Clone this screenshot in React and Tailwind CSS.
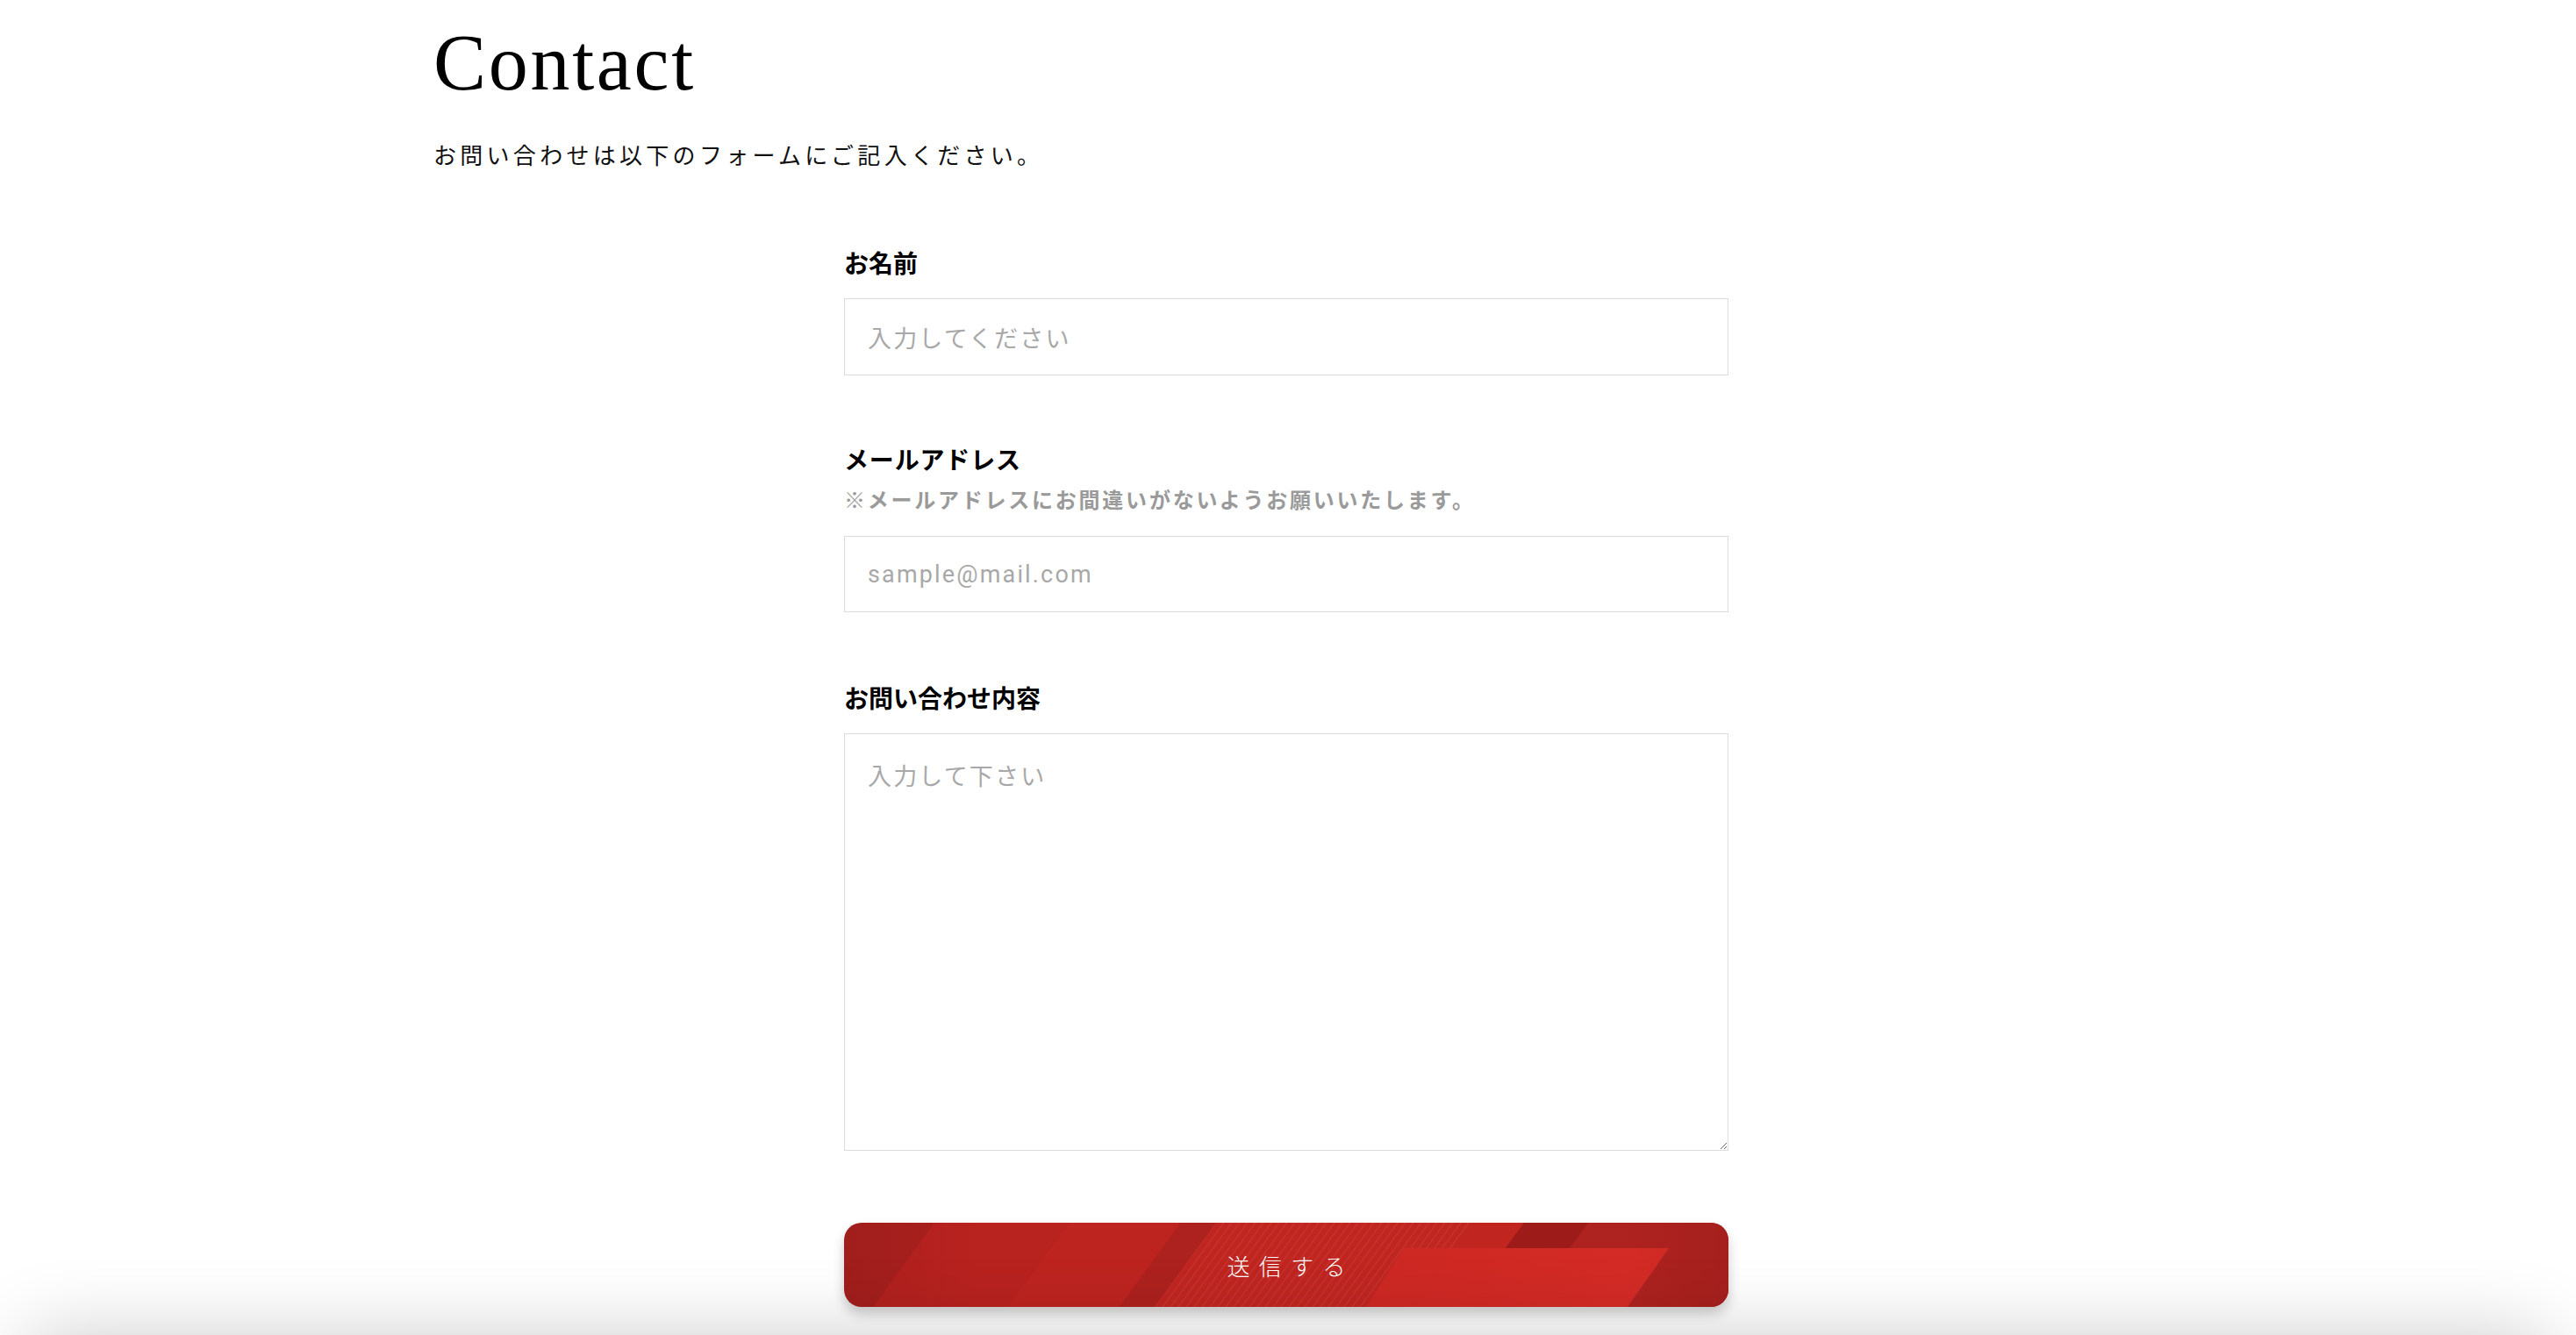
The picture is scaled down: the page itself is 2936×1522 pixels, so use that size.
import { useState } from 'react';

const jp = "font-['Noto_Sans_CJK_JP',sans-serif]";

function SubmitBackground() {
    // diagonal red panels behind the button label
    return (
        <svg className="absolute inset-0 h-full w-full" viewBox="0 0 1008 96" preserveAspectRatio="none" aria-hidden="true">
            <defs>
                <pattern id="stripes" width="9" height="96" patternUnits="userSpaceOnUse" patternTransform="skewX(-36)">
                    <rect x="0" y="0" width="1.5" height="96" fill="#ffffff" opacity="0.08" />
                </pattern>
                <linearGradient id="bright" x1="0" y1="0" x2="1" y2="0">
                    <stop offset="0" stopColor="#cd2823" />
                    <stop offset="1" stopColor="#d52b26" />
                </linearGradient>
                <linearGradient id="edge" x1="0" y1="0" x2="1" y2="0">
                    <stop offset="0" stopColor="#000000" stopOpacity="0.06" />
                    <stop offset="0.15" stopColor="#000000" stopOpacity="0" />
                    <stop offset="0.88" stopColor="#000000" stopOpacity="0" />
                    <stop offset="1" stopColor="#000000" stopOpacity="0.05" />
                </linearGradient>
            </defs>
            <rect x="0" y="0" width="1008" height="96" fill="#aa201e" />
            <polygon points="103,0 256,0 186,96 33,96" fill="#b8221f" />
            <polygon points="256,0 384,0 314,96 186,96" fill="#bd2420" />
            <polygon points="384,0 424,0 354,96 314,96" fill="#ad211e" />
            <polygon points="424,0 775,0 705,96 354,96" fill="#c02520" />
            <polygon points="424,0 720,0 650,96 354,96" fill="url(#stripes)" />
            <polygon points="848,0 1008,0 1008,96 778,96" fill="#ae221f" />
            <polygon points="775,0 848,0 827,29 754,29" fill="#9d1c1a" />
            <polygon points="638,29 940,29 893,96 595,96" fill="url(#bright)" />
            <rect x="0" y="0" width="1008" height="96" fill="url(#edge)" />
        </svg>
    );
}

export default function App() {
    const [form, setForm] = useState({ name: '', email: '', message: '' });

    const update = (key) => (e) => setForm({ ...form, [key]: e.target.value });

    return (
        <div className="min-h-screen w-full bg-white text-[#111]">
            <div className="mx-auto w-[1948px] pt-[27px]">
                {/* Heading */}
                <h1 className="font-['Liberation_Serif',serif] text-[90px] leading-none tracking-[0.03em] text-black">Contact</h1>
                <p className={`${jp} mt-[39px] text-[26px] leading-[40px] tracking-[0.165em] text-[#111]`}>
                    お問い合わせは以下のフォームにご記入ください。
                </p>

                {/* Form */}
                <form className="ml-[468px] mt-[82px] w-[1008px]" onSubmit={(e) => e.preventDefault()}>
                    <label className={`${jp} block text-[28px] font-bold leading-[42px] text-black`}>お名前</label>
                    <input
                        type="text"
                        value={form.name}
                        onChange={update('name')}
                        placeholder="入力してください"
                        className={`${jp} mt-[20px] block h-[88px] w-full border border-[#dcdcdc] bg-white px-[26px] text-[27px] tracking-[0.08em] outline-none placeholder:text-[#a8a8a8]`}
                    />

                    <label className={`${jp} mt-[74px] block text-[28px] font-bold leading-[42px] tracking-[0.03em] text-black`}>メールアドレス</label>
                    <p className={`${jp} mt-[7px] text-[24px] font-bold leading-[36px] tracking-[0.115em] text-[#9a9a9a]`}>
                        ※メールアドレスにお間違いがないようお願いいたします。
                    </p>
                    <input
                        type="email"
                        value={form.email}
                        onChange={update('email')}
                        placeholder="sample@mail.com"
                        className="mt-[24px] block h-[87px] w-full border border-[#dcdcdc] bg-white px-[26px] font-['Roboto',sans-serif] text-[27px] tracking-[0.08em] outline-none placeholder:text-[#a8a8a8]"
                    />

                    <label className={`${jp} mt-[76px] block text-[28px] font-bold leading-[42px] text-black`}>お問い合わせ内容</label>
                    <textarea
                        value={form.message}
                        onChange={update('message')}
                        placeholder="入力して下さい"
                        className={`${jp} mt-[20px] block h-[476px] w-full border border-[#dcdcdc] bg-white px-[26px] py-[26px] text-[27px] leading-[42px] tracking-[0.08em] outline-none placeholder:text-[#a8a8a8]`}
                    />

                    <button
                        type="submit"
                        className="relative mt-[82px] block h-[96px] w-full overflow-hidden rounded-[20px] shadow-[0_8px_14px_rgba(0,0,0,0.2)]"
                    >
                        <SubmitBackground />
                        <span className={`${jp} relative pl-[0.4em] text-[26px] font-light tracking-[0.4em] text-white`}>送信する</span>
                    </button>
                </form>
            </div>

            {/* shadow of the section below the fold */}
            <div className="pointer-events-none fixed left-[30px] right-[30px] top-full h-[200px] bg-white shadow-[0_0_90px_rgba(0,0,0,0.2)]" />
        </div>
    );
}
